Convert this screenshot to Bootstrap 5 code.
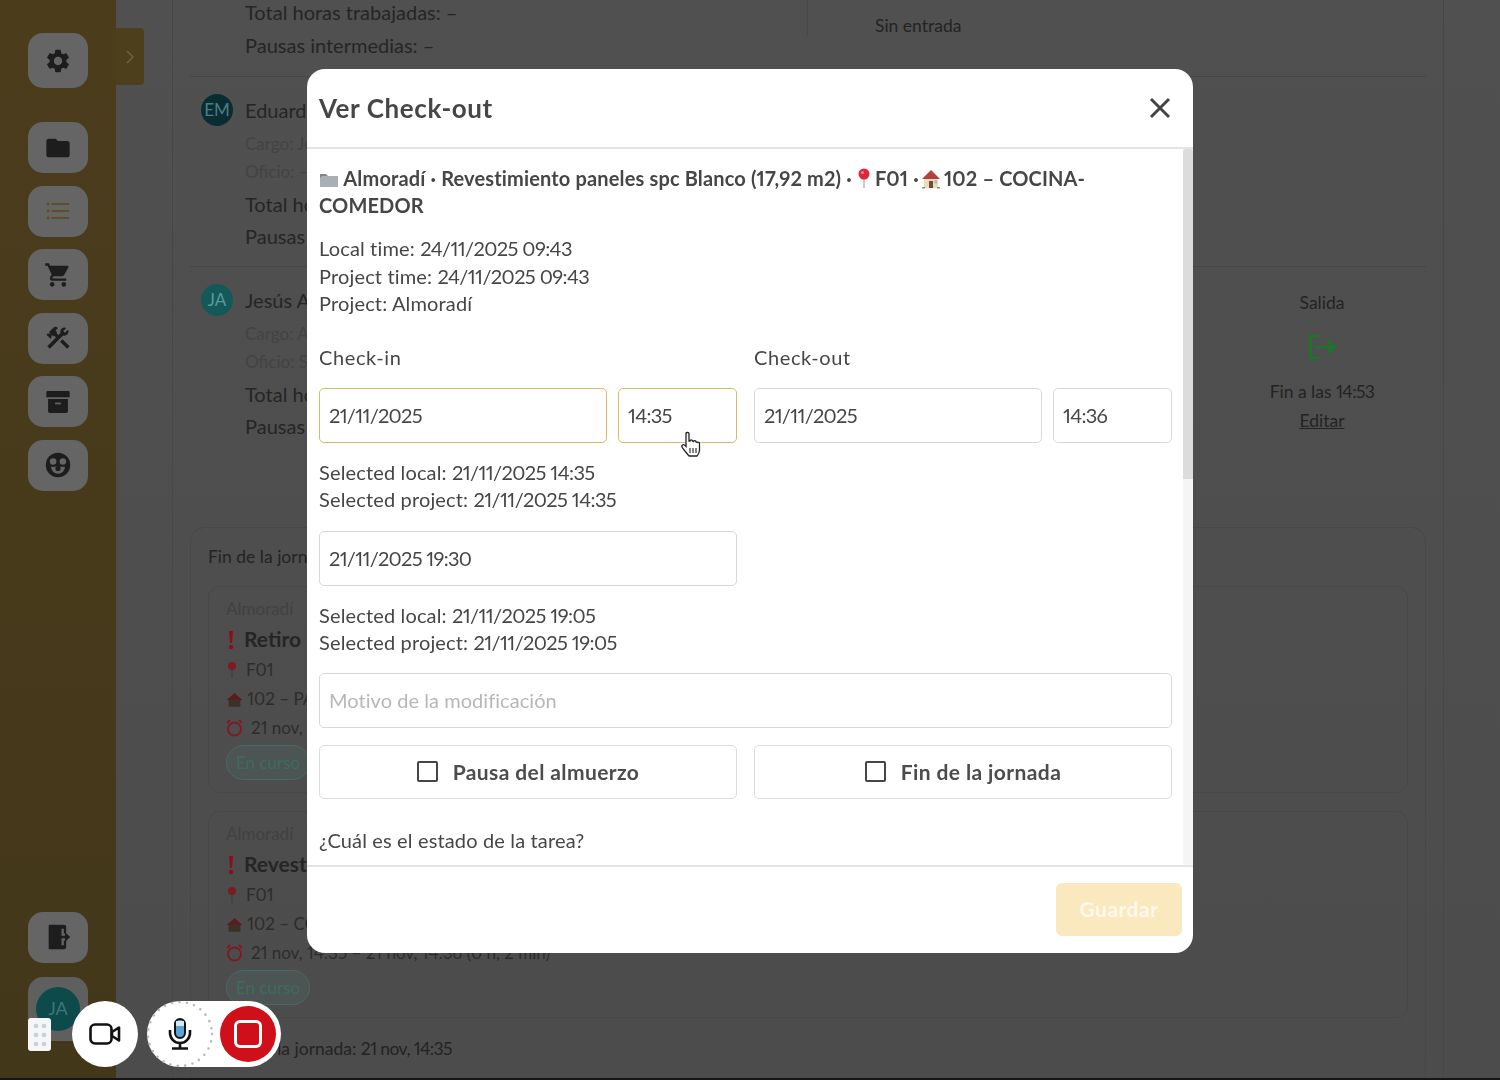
<!DOCTYPE html>
<html lang="es">
<head>
    <meta charset="UTF-8">
    <meta name="viewport" content="width=device-width, initial-scale=1.0">
    <title>Ver Check-out</title>
    <link href="https://cdn.jsdelivr.net/npm/bootstrap@5.3.0/dist/css/bootstrap.min.css" rel="stylesheet">
    <style>
        html, body { height: 1080px; overflow: hidden; }
        body { font-family: "Lato", "Liberation Sans", sans-serif; font-variant-numeric: proportional-nums; background: linear-gradient(#505050, #4c4c4c); color: #222; font-size: 20px; }
        .num-txt { letter-spacing: -.6px; }

        /* sidebar */
        .side-bar { width: 116px; height: 1080px; flex-shrink: 0; background: linear-gradient(#4b3d1c, #43371a); padding: 33px 28px 0; position: relative; }
        .side-btn { width: 60px; height: 51px; background: #656565; border-radius: 15px; margin-bottom: 12.6px; }
        .side-btn.gear-btn { height: 55px; margin-bottom: 34px; }
        .side-btn svg { fill: #1d1d1d; width: 28px; height: 28px; }
        .side-btn.logout-btn { margin-top: 421px; margin-bottom: 14px; }
        .side-btn.me-btn { height: 64px; background: #5f5f5f; }
        .side-avatar { width: 44px; height: 44px; border-radius: 50%; background: #0d4a4c; color: #3f7677; font-size: 18px; }
        .side-tab { position: absolute; left: 116px; top: 28px; width: 28px; height: 57px; background: #4d3f1c; border-radius: 0 4px 4px 0; }

        /* page behind the modal */
        .main-panel { width: 1272px; margin-left: 56px; height: 1080px; border-left: 1px solid #474747; border-right: 1px solid #474747; padding: 0 17px; overflow: hidden; }
        .worker-row { border-bottom: 1px solid #464646; padding: 17px 0 0 11px; height: 190px; }
        .worker-row.first-row { height: 81px; margin-top: -4px; padding: 0 0 0 55px; }
        .worker-row.last-row { height: 240px; border-bottom: 0; }
        .first-col { width: 563px; border-right: 1px solid #474747; height: 40px; }
        .line-big { line-height: 32.5px; height: 32.5px; color: #252525; white-space: nowrap; }
        .line-big.name-line { margin-bottom: 3px; }
        .line-big.total-line { margin-top: 1px; }
        .line-faint { line-height: 28.5px; height: 28.5px; font-size: 17px; color: #434343; }
        .worker-av { width: 32px; height: 32px; border-radius: 50%; font-size: 17px; margin-right: 12px; flex-shrink: 0; }
        .av-em { background: #0a2d33; color: #4f7d82; }
        .av-ja { background: #14595a; color: #5a9a9a; }
        .small-txt { font-size: 17.5px; color: #232323; }
        .sin-entrada { padding: 17px 0 0 67px; }
        .salida-col { width: 208px; margin-left: auto; text-align: center; padding-top: 6px; }
        .salida-col a { color: #232323; }
        .salida-icon { display: block; margin: 18px auto 19px; }
        .edit-line { margin-top: 2px; }
        .fin-box { border: 1px solid #474747; border-radius: 14px; padding: 16px 17px 0; height: 560px; margin-top: 20px; }
        .fin-title { margin-bottom: 16px; }
        .task-box { border: 1px solid #474747; border-radius: 12px; height: 207px; padding: 10px 17px; margin-bottom: 18px; }
        .task-name { font-weight: 700; font-size: 21px; color: #252525; line-height: 32px; margin-top: 2px; white-space: nowrap; }
        .task-line { font-size: 17px; line-height: 29px; color: #2c2c2c; white-space: nowrap; }
        .task-top { font-size: 17px; line-height: 24px; color: #414141; }
        .state-pill { display: inline-block; margin-top: 3px; border: 1px solid #476a62; background: #4c5553; color: #3e6b60; font-size: 17px; line-height: 33px; padding: 0 9px; border-radius: 18px; }
        .emo { vertical-align: -3px; }

        /* modal */
        .check-dialog { max-width: 886px; height: 884px; margin: 69px auto 0; }
        .check-dialog .modal-content { border: 0; border-radius: 18px; color: #464646; overflow: hidden; }
        .check-dialog .modal-header { height: 80px; padding: 0 12px; border-bottom: 2px solid #e4e4e4; }
        .check-dialog .modal-title { font-size: 26px; font-weight: 700; color: #464646; letter-spacing: .6px; }
        .close-x { margin-left: auto; margin-right: 10px; line-height: 0; }
        .check-dialog .modal-body { padding: 16px 21px 0 12px; letter-spacing: .15px; }
        .check-dialog .modal-footer { height: 88px; padding: 0 7px 2px 0; border-top: 2px solid #e4e4e4; }
        .bar-track { position: absolute; right: 0; top: 80px; bottom: 88px; width: 10px; background: #f5f5f5; }
        .bar-thumb { height: 330px; background: #dcdcdc; border-radius: 3px 3px 0 0; }
        .info-txt { line-height: 27.5px; margin: 0; }
        .info-head { font-weight: 700; line-height: 27px; }
        .pin-emo { margin: 0 -1px 0 0; }
        .house-emo { margin: 0 -2px 0 -3px; }
        .field-label { line-height: 28px; margin: 25px 0 17px; letter-spacing: .6px; }
        .date-pair { gap: 11px; }
        .check-input { height: 55px; font-size: 20px; color: #464646; border: 1px solid #d8d8d8; border-radius: 5px; padding: 0 9px; font-family: inherit; font-variant-numeric: proportional-nums; letter-spacing: -.7px; }
        .check-input::placeholder { color: #b7b7b7; letter-spacing: .05px; }
        .check-input.is-hot { border: 1.5px solid #dfb866; }
        .time-input { width: 119px; flex-shrink: 0; }
        .txt-gap { margin-top: 16px; }
        .row-gap { margin-top: 17px; }
        .check-grid { --bs-gutter-x: 17px; }
        .toggle-btn { height: 54px; width: 100%; background: #fff; border: 1px solid #dcdcdc; border-radius: 5px; font-size: 21px; font-weight: 700; color: #4c4c4c; letter-spacing: .4px; }
        .toggle-box { width: 21px; height: 21px; border: 2.5px solid #464646; border-radius: 2px; margin-right: 15px; }
        .save-btn:disabled { width: 126px; height: 53px; background: #fae9bf; border-color: #fae9bf; color: #fdf8ea; font-size: 21px; font-weight: 700; border-radius: 6px; opacity: 1; letter-spacing: .5px; }
        .question-txt { margin-top: 28px; }
        .hand-cursor { position: absolute; left: 681px; top: 431px; z-index: 1060; }

        /* recorder */
        .rec-handle { position: fixed; left: 28px; top: 1018px; width: 23px; height: 33px; background: #f4f6f8; border-radius: 3px; z-index: 1070; }
        .rec-cam { position: fixed; left: 72px; top: 1001px; width: 66px; height: 66px; border-radius: 50%; background: #fff; z-index: 1070; }
        .rec-pill { position: fixed; left: 147px; top: 1001px; width: 134px; height: 66px; border-radius: 33px; background: #fff; z-index: 1070; }
        .rec-stop { position: absolute; right: 5px; top: 5px; width: 56px; height: 56px; border-radius: 50%; background: #cf101b; }
        .rec-stop-in { width: 28px; height: 28px; border: 3px solid #fff; border-radius: 6px; }
        .rec-ring { position: absolute; left: 0; top: 0; }
        .bottom-strip { position: fixed; left: 0; right: 0; top: 1078px; height: 2px; background: #151515; z-index: 1080; }
    </style>
</head>
<body class="d-flex">

    <aside class="side-bar">
        <div class="side-btn gear-btn d-flex align-items-center justify-content-center">
            <svg viewBox="0 0 24 24"><path d="M19.14 12.94c.04-.3.06-.61.06-.94 0-.32-.02-.64-.07-.94l2.03-1.58c.18-.14.23-.41.12-.61l-1.92-3.32c-.12-.22-.37-.29-.59-.22l-2.39.96c-.5-.38-1.03-.7-1.62-.94l-.36-2.54c-.04-.24-.24-.41-.48-.41h-3.84c-.24 0-.43.17-.47.41l-.36 2.54c-.59.24-1.13.57-1.62.94l-2.39-.96c-.22-.08-.47 0-.59.22L2.74 8.87c-.12.21-.08.47.12.61l2.03 1.58c-.05.3-.09.63-.09.94s.02.64.07.94l-2.03 1.58c-.18.14-.23.41-.12.61l1.92 3.32c.12.22.37.29.59.22l2.39-.96c.5.38 1.03.7 1.62.94l.36 2.54c.05.24.24.41.48.41h3.84c.24 0 .44-.17.47-.41l.36-2.54c.59-.24 1.13-.56 1.62-.94l2.39.96c.22.08.47 0 .59-.22l1.92-3.32c.12-.22.07-.47-.12-.61l-2.01-1.58zM12 15.6c-1.98 0-3.6-1.62-3.6-3.6s1.62-3.6 3.6-3.6 3.6 1.62 3.6 3.6-1.62 3.6-3.6 3.6z"/></svg>
        </div>
        <div class="side-btn d-flex align-items-center justify-content-center">
            <svg viewBox="0 0 24 24"><path d="M10 4H4c-1.1 0-1.99.9-1.99 2L2 18c0 1.100.9 2 2 2h16c1.100 0 2-.9 2-2V8c0-1.100-.9-2-2-2h-8l-2-2z"/></svg>
        </div>
        <div class="side-btn d-flex align-items-center justify-content-center">
            <svg viewBox="0 0 24 24"><g fill="#5f4e25"><circle cx="3.500" cy="6" r="1.200"/><circle cx="3.500" cy="12" r="1.200"/><circle cx="3.500" cy="18" r="1.200"/><rect x="6.500" y="5.200" width="15" height="1.600"/><rect x="6.500" y="11.200" width="15" height="1.600"/><rect x="6.500" y="17.200" width="15" height="1.600"/></g></svg>
        </div>
        <div class="side-btn d-flex align-items-center justify-content-center">
            <svg viewBox="0 0 24 24"><path d="M15.550 13c.75 0 1.410-.41 1.750-1.030l3.580-6.490c.37-.66-.11-1.480-.87-1.480H5.210l-.94-2H1v2h2l3.600 7.590-1.350 2.440C4.520 15.370 5.480 17 7 17h12v-2H7l1.100-2h7.450zM7 18c-1.100 0-1.990.9-1.990 2S5.900 22 7 22s2-.9 2-2-.9-2-2-2zm10 0c-1.100 0-1.990.9-1.990 2s.89 2 1.990 2 2-.9 2-2-.9-2-2-2z"/></svg>
        </div>
        <div class="side-btn d-flex align-items-center justify-content-center">
            <svg viewBox="0 0 24 24"><path d="M13.780 15.300l6 6 2.110-2.160-6-6zM17.500 10c1.930 0 3.500-1.570 3.500-3.500 0-.58-.16-1.120-.41-1.600l-2.700 2.700-1.490-1.490 2.700-2.700c-.48-.25-1.020-.41-1.600-.41C15.570 3 14 4.570 14 6.500c0 .41.080.8.210 1.160l-1.850 1.850-1.780-1.780.71-.71-1.410-1.410L12 3.490a3 3 0 0 0-4.240 0L4.220 7.030l1.410 1.410H2.810l-.71.71 3.540 3.540.71-.71V9.150l1.410 1.410.71-.71 1.780 1.780-7.410 7.410 2.120 2.120L16.340 9.790c.36.13.75.21 1.160.21z"/></svg>
        </div>
        <div class="side-btn d-flex align-items-center justify-content-center">
            <svg viewBox="0 0 24 24"><rect x="2" y="2.500" width="20" height="5.500" rx="1"/><path d="M3.500 9.500h17V20a1.500 1.500 0 0 1-1.500 1.500H5A1.500 1.500 0 0 1 3.500 20z"/><rect x="9.500" y="12.500" width="5" height="1.500" fill="#656565"/></svg>
        </div>
        <div class="side-btn d-flex align-items-center justify-content-center">
            <svg viewBox="0 0 24 24"><circle cx="12" cy="12" r="10.500"/><circle cx="7.800" cy="9" r="2.800" fill="#656565"/><circle cx="16.200" cy="9" r="2.800" fill="#656565"/><path d="M6 13.500h12a6 6 0 0 1-12 0z" fill="#656565"/><circle cx="12" cy="15" r="2.200"/></svg>
        </div>
        <div class="side-btn logout-btn d-flex align-items-center justify-content-center">
            <svg viewBox="0 0 24 24"><path d="M5 1.500h12a2 2 0 0 1 2 2V9h-2V5H7v14h10v-4h2v5.500a2 2 0 0 1-2 2H5a1 1 0 0 1-1-1v-19a1 1 0 0 1 1-1z"/><path d="M5 3h10v18H5z"/><path d="M11 11h7V8l4.500 4-4.500 4v-3h-7z"/></svg>
        </div>
        <div class="side-btn me-btn d-flex align-items-center justify-content-center">
            <div class="side-avatar d-flex align-items-center justify-content-center">JA</div>
        </div>
        <div class="side-tab d-flex align-items-center justify-content-center">
            <svg width="10" height="16" viewBox="0 0 10 16"><path d="M2 2l6 6-6 6" fill="none" stroke="#6f6038" stroke-width="1.600"/></svg>
        </div>
    </aside>

    <main class="main-panel">
        <div class="worker-row first-row d-flex">
            <div class="first-col">
                <div class="line-big">Total horas trabajadas: –</div>
                <div class="line-big">Pausas intermedias: –</div>
            </div>
            <div class="sin-entrada small-txt">Sin entrada</div>
        </div>

        <div class="worker-row d-flex">
            <div class="worker-av av-em d-flex align-items-center justify-content-center">EM</div>
            <div>
                <div class="line-big name-line">Eduardo</div>
                <div class="line-faint">Cargo: Jefe</div>
                <div class="line-faint">Oficio: –</div>
                <div class="line-big total-line">Total horas</div>
                <div class="line-big">Pausas</div>
            </div>
        </div>

        <div class="worker-row last-row d-flex">
            <div class="worker-av av-ja d-flex align-items-center justify-content-center">JA</div>
            <div>
                <div class="line-big name-line">Jesús A</div>
                <div class="line-faint">Cargo: A</div>
                <div class="line-faint">Oficio: S</div>
                <div class="line-big total-line">Total horas</div>
                <div class="line-big">Pausas</div>
            </div>
            <div class="salida-col small-txt">
                <div>Salida</div>
                <svg class="salida-icon" width="28" height="26" viewBox="0 0 28 26" fill="none" stroke="#167a25" stroke-width="2.600"><path d="M11 2H2.500v22H11"/><path d="M7 13h19M19.500 6.500L26 13l-6.500 6.500"/></svg>
                <div>Fin a las <span class="num-txt">14:53</span></div>
                <div class="edit-line"><a href="#">Editar</a></div>
            </div>
        </div>

        <div class="fin-box">
            <div class="small-txt fin-title">Fin de la jornada</div>
            <div class="task-box">
                <div class="task-top">Almoradí</div>
                <div class="task-name"><svg class="emo me-2" width="10" height="20" viewBox="0 0 10 20"><path d="M3 1h4l-1 12H4z" fill="#8a0f1c"/><circle cx="5" cy="17" r="2.200" fill="#8a0f1c"/></svg>Retiro</div>
                <div class="task-line"><svg class="emo me-2" width="12" height="18" viewBox="0 0 12 18"><circle cx="6" cy="5" r="4" fill="#7f1a24"/><path d="M5.500 8h1v9h-1z" fill="#3b3b3b"/></svg>F01</div>
                <div class="task-line"><svg class="emo" width="17" height="16" viewBox="0 0 20 18"><path d="M10 1L1 9h2v8h14V9h2z" fill="#3a3228"/><path d="M10 1L1 9h18z" fill="#5a1d1d"/></svg> 102 – PA</div>
                <div class="task-line"><svg class="emo me-2" width="17" height="18" viewBox="0 0 17 18"><circle cx="8.500" cy="10" r="6.500" fill="none" stroke="#7f1a24" stroke-width="2"/><path d="M1 4l3-3M16 4l-3-3" stroke="#7f1a24" stroke-width="2"/></svg>21 nov, 14:35</div>
                <span class="state-pill">En curso</span>
            </div>
            <div class="task-box">
                <div class="task-top">Almoradí</div>
                <div class="task-name"><svg class="emo me-2" width="10" height="20" viewBox="0 0 10 20"><path d="M3 1h4l-1 12H4z" fill="#8a0f1c"/><circle cx="5" cy="17" r="2.200" fill="#8a0f1c"/></svg>Revest</div>
                <div class="task-line"><svg class="emo me-2" width="12" height="18" viewBox="0 0 12 18"><circle cx="6" cy="5" r="4" fill="#7f1a24"/><path d="M5.500 8h1v9h-1z" fill="#3b3b3b"/></svg>F01</div>
                <div class="task-line"><svg class="emo" width="17" height="16" viewBox="0 0 20 18"><path d="M10 1L1 9h2v8h14V9h2z" fill="#3a3228"/><path d="M10 1L1 9h18z" fill="#5a1d1d"/></svg> 102 – CO</div>
                <div class="task-line"><svg class="emo me-2" width="17" height="18" viewBox="0 0 17 18"><circle cx="8.500" cy="10" r="6.500" fill="none" stroke="#7f1a24" stroke-width="2"/><path d="M1 4l3-3M16 4l-3-3" stroke="#7f1a24" stroke-width="2"/></svg>21 nov, 14:35 – 21 nov, 14:36 (0 h, 2 min)</div>
                <span class="state-pill">En curso</span>
            </div>
            <div class="small-txt">Inicio de la jornada: <span class="num-txt">21 nov, 14:35</span></div>
        </div>
    </main>

    <div class="modal d-block" tabindex="-1">
        <div class="modal-dialog check-dialog">
            <div class="modal-content h-100">
                <div class="modal-header">
                    <h5 class="modal-title">Ver Check-out</h5>
                    <button type="button" class="btn p-0 border-0 close-x" aria-label="Close">
                        <svg width="22" height="22" viewBox="0 0 22 22" fill="none" stroke="#444" stroke-width="3"><path d="M2 2l18 18M20 2L2 20"/></svg>
                    </button>
                </div>
                <div class="modal-body">
                    <p class="info-txt info-head">
                        <svg class="emo" width="20" height="18" viewBox="0 0 20 18"><path d="M1 3h6l2 2h10v11H1z" fill="#7f858a"/><path d="M1 7l2-2h16v11H1z" fill="#a9b0b5"/></svg>
                        Almoradí · Revestimiento paneles spc Blanco (17,92 m2) ·
                        <svg class="emo pin-emo" width="14" height="21" viewBox="0 0 14 21"><path d="M6.500 9h1v11h-1z" fill="#9a9a9a"/><circle cx="7" cy="6" r="5.500" fill="#e0263c"/><circle cx="5.500" cy="4.500" r="1.500" fill="#f28a96"/></svg>
                        F01 ·
                        <svg class="emo house-emo" width="20" height="20" viewBox="0 0 20 20"><path d="M3 9h14v10H3z" fill="#e8dcc0"/><path d="M10 1L1 10h18z" fill="#b5413c"/><path d="M8 12h4v7H8z" fill="#7a4a2a"/><path d="M13.500 11.500h2.500v3h-2.500z" fill="#8fc3e0"/><path d="M1 18h3v1.500H1zM16 18h3v1.500h-3z" fill="#6aa84f"/></svg>
                        102 – COCINA-COMEDOR
                    </p>
                    <p class="info-txt mt-3">Local time: <span class="num-txt">24/11/2025 09:43</span><br>Project time: <span class="num-txt">24/11/2025 09:43</span><br>Project: Almoradí</p>

                    <div class="row check-grid">
                        <div class="col-6">
                            <div class="field-label">Check-in</div>
                            <div class="d-flex date-pair">
                                <input type="text" class="form-control check-input is-hot" value="21/11/2025">
                                <input type="text" class="form-control check-input is-hot time-input" value="14:35">
                            </div>
                        </div>
                        <div class="col-6">
                            <div class="field-label">Check-out</div>
                            <div class="d-flex date-pair">
                                <input type="text" class="form-control check-input" value="21/11/2025">
                                <input type="text" class="form-control check-input time-input" value="14:36">
                            </div>
                        </div>
                    </div>
                    <p class="info-txt txt-gap">Selected local: <span class="num-txt">21/11/2025 14:35</span><br>Selected project: <span class="num-txt">21/11/2025 14:35</span></p>

                    <div class="row check-grid row-gap">
                        <div class="col-6">
                            <input type="text" class="form-control check-input" value="21/11/2025 19:30">
                        </div>
                    </div>
                    <p class="info-txt txt-gap">Selected local: <span class="num-txt">21/11/2025 19:05</span><br>Selected project: <span class="num-txt">21/11/2025 19:05</span></p>

                    <input type="text" class="form-control check-input txt-gap" placeholder="Motivo de la modificación">

                    <div class="row check-grid row-gap">
                        <div class="col-6">
                            <button type="button" class="toggle-btn d-flex align-items-center justify-content-center"><span class="toggle-box"></span>Pausa del almuerzo</button>
                        </div>
                        <div class="col-6">
                            <button type="button" class="toggle-btn d-flex align-items-center justify-content-center"><span class="toggle-box"></span>Fin de la jornada</button>
                        </div>
                    </div>

                    <p class="info-txt question-txt">¿Cuál es el estado de la tarea?</p>
                </div>
                <div class="modal-footer">
                    <button type="button" class="btn save-btn" disabled>Guardar</button>
                </div>
                <div class="bar-track"><div class="bar-thumb"></div></div>
            </div>
        </div>
    </div>

    <svg class="hand-cursor" width="20" height="26" viewBox="0 0 20 26"><path d="M5 2.500c0-1.500 3-1.500 3 0V10l1 0c0-1.500 2.500-1.500 2.500 0l1 .5c0-1.300 2.500-1.300 2.500.3l1 .7c1-.7 2.500 0 2.500 1.300V19c0 3-2 5.500-2.500 6H8c-1-1.500-6-7-7-9-.8-1.600 1-3 2.500-2L5 15.500z" fill="#fff" stroke="#222" stroke-width="1.300"/><path d="M9 17v5M12 17v5M15 17v5" stroke="#222" stroke-width="1.100"/></svg>

    <div class="rec-handle d-flex align-items-center justify-content-center">
        <svg width="14" height="24" viewBox="0 0 14 24" fill="#c9d0d6"><circle cx="3" cy="3" r="2.300"/><circle cx="11" cy="3" r="2.300"/><circle cx="3" cy="12" r="2.300"/><circle cx="11" cy="12" r="2.300"/><circle cx="3" cy="21" r="2.300"/><circle cx="11" cy="21" r="2.300"/></svg>
    </div>
    <div class="rec-cam d-flex align-items-center justify-content-center">
        <svg width="32" height="24" viewBox="0 0 32 24" fill="none" stroke="#111" stroke-width="2.600" stroke-linejoin="round"><rect x="1.500" y="2.500" width="21" height="19" rx="4.500"/><path d="M23 10l7-4.500v13L23 14z"/></svg>
    </div>
    <div class="rec-pill">
        <svg class="rec-ring" width="66" height="66" viewBox="0 0 66 66"><circle cx="33" cy="33" r="32" fill="none" stroke="#b9b9b9" stroke-width="2.600" stroke-linecap="round" stroke-dasharray="0 7.500"/></svg>
        <svg class="rec-ring" width="66" height="66" viewBox="0 0 66 66"><rect x="28" y="18" width="10" height="19" rx="5" fill="#5aa5d8" stroke="#111" stroke-width="2"/><path d="M29 22.500h8" stroke="#d9e9f4" stroke-width="5"/><path d="M23 29v3a10 10 0 0 0 20 0v-3M33 42v5M25 47.500h16" fill="none" stroke="#111" stroke-width="2.600"/></svg>
        <div class="rec-stop d-flex align-items-center justify-content-center"><div class="rec-stop-in"></div></div>
    </div>
    <div class="bottom-strip"></div>

    <script src="https://cdn.jsdelivr.net/npm/bootstrap@5.3.0/dist/js/bootstrap.bundle.min.js"></script>
</body>
</html>
